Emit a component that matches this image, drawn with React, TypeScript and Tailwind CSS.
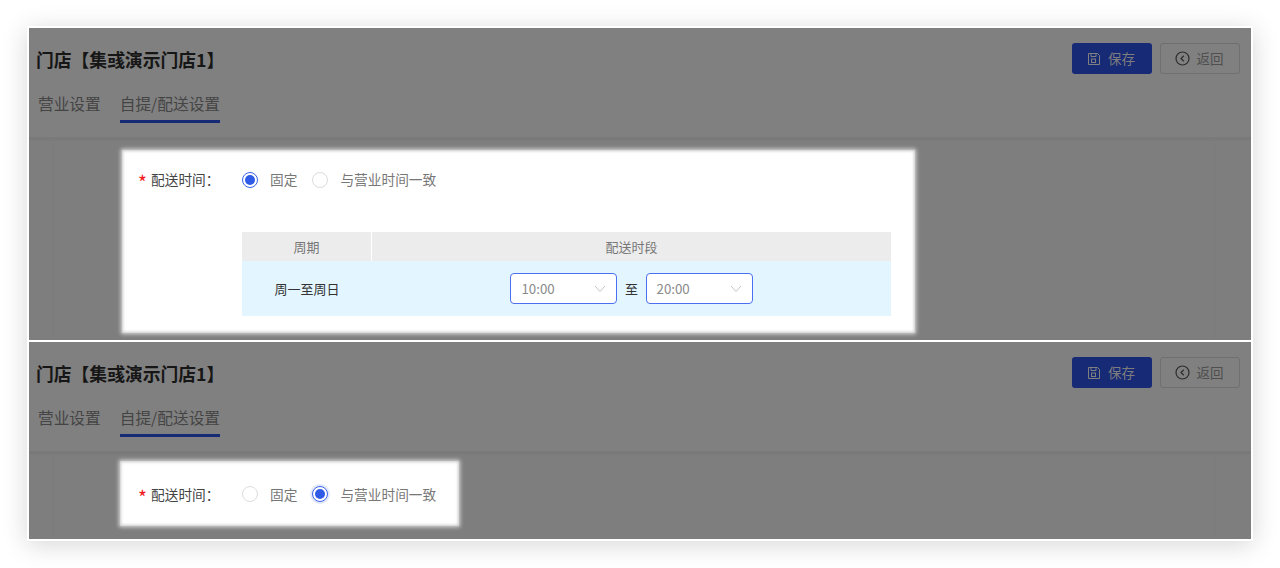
import React from "react";

const font = { fontFamily: '"Noto Sans CJK SC", "Liberation Sans", sans-serif' };

function Radio({ on, glow }: { on?: boolean; glow?: boolean }) {
  return (
    <span className={`mt-[1px] flex h-4 w-4 shrink-0 items-center justify-center rounded-full border bg-white ${on ? "border-[#3b63e8]" : "border-[#dcdcdc]"} ${glow ? "shadow-[0_0_0_2px_#e3e9fb]" : ""}`}>
      {on && <span className="h-[10px] w-[10px] rounded-full bg-[#2f5be7]" />}
    </span>
  );
}

function Header() {
  return (
    <div className="h-[110px] shrink-0 border-b border-[#7a7a7a] bg-[#808080] shadow-[0_1px_3px_rgba(0,0,0,0.08)]">
      <div className="flex items-start justify-between pl-[7px] pr-[11px] pt-[15px]">
        <h1 className="mt-[1px] text-[17.8px] font-bold leading-[30px] text-[#161616]">门店【集彧演示门店1】</h1>
        <div className="flex gap-2">
          <button className="flex h-[31px] w-20 items-center justify-center gap-[7px] rounded-[3px] bg-[#172a75] pr-[2px] text-[13.5px] text-[#7d7d7d]">
            <svg width="14" height="14" viewBox="0 0 14 14" fill="none" stroke="#808080" strokeWidth="1">
              <path d="M1.5 1.5h9l2 2v9h-11z" />
              <path d="M4 1.5v3h5v-3" />
              <rect x="4.5" y="7" width="4" height="3.5" />
            </svg>
            保存
          </button>
          <button className="flex h-[31px] w-20 items-center justify-center gap-[7px] rounded-[3px] border border-[#6f6f6f] pr-[2px] text-[13.5px] text-[#4f4f4f]">
            <svg width="15" height="15" viewBox="0 0 15 15" fill="none" stroke="#2c2c2c" strokeWidth="1.2">
              <circle cx="7.5" cy="7.5" r="6.5" />
              <path d="M8.8 4.8 6 7.5l2.8 2.7" />
            </svg>
            返回
          </button>
        </div>
      </div>
      <div className="mt-[18px] flex gap-[19px] pl-[9px] text-[15.7px] leading-[24px] text-[#444444]">
        <span className="pb-[4px]">营业设置</span>
        <span className="border-b-[3px] border-[#172a75] pb-[4px]">自提/配送设置</span>
      </div>
    </div>
  );
}

function FormRow({ second }: { second?: boolean }) {
  return (
    <div className="flex h-[20px] items-center text-[13.7px] leading-5">
      <span className="relative top-[3px] w-[10px] text-[19px] text-[#f01818]">*</span>
      <span className="ml-[3px] w-[91px] text-[#444444]">配送时间：</span>
      <Radio on={!second} />
      <span className="ml-[12px] text-[#777777]">固定</span>
      <span className="ml-[15px]"><Radio on={second} glow={second} /></span>
      <span className="ml-[12px] text-[#777777]">与营业时间一致</span>
    </div>
  );
}

function TimeSelect({ value }: { value: string }) {
  return (
    <div className="flex h-[31px] w-[107px] items-center justify-between rounded-[4px] border-[1.5px] border-[#4a6ff0] bg-white pl-[10px] pr-[10px] text-[13.3px] text-[#8a8a8a]">
      {value}
      <svg width="12" height="8" viewBox="0 0 12 8" fill="none" stroke="#c4c4c4" strokeWidth="1">
        <path d="M1 1l5 5.5L11 1" />
      </svg>
    </div>
  );
}

function Panel({ second }: { second?: boolean }) {
  return (
    <div className={`flex flex-col overflow-hidden bg-[#7e7e7e] ${second ? "h-[197px]" : "h-[312px]"}`}>
      <Header />
      <div className="ml-[24px] mr-[36px] flex-1 border-x border-[#7b7b7b]">
        {second ? (
          <div className="ml-[66px] mt-[9px] flex h-[65px] w-[339px] items-center bg-white pl-[18px] shadow-[0_0_4px_1px_rgba(255,255,255,0.75),inset_0_0_3px_1px_rgba(128,128,128,0.45)]">
            <FormRow second />
          </div>
        ) : (
          <div className="ml-[68px] mt-[12px] h-[183px] w-[793px] bg-white pl-[16px] pt-[19px] shadow-[0_0_4px_1px_rgba(255,255,255,0.75),inset_0_0_3px_1px_rgba(128,128,128,0.45)]">
            <FormRow />
            <div className="ml-[104px] mt-[43px] w-[649px] text-[13px]">
              <div className="flex h-[29px] bg-[#ececec] text-[#777777]">
                <div className="flex w-[130px] items-center justify-center border-r border-white">周期</div>
                <div className="flex flex-1 items-center justify-center">配送时段</div>
              </div>
              <div className="flex h-[55px] items-center bg-[#e3f5fe] text-[#333333]">
                <div className="flex w-[130px] justify-center">周一至周日</div>
                <div className="flex flex-1 items-center justify-center gap-[7.5px]">
                  <TimeSelect value="10:00" />
                  <span>至</span>
                  <TimeSelect value="20:00" />
                </div>
              </div>
            </div>
          </div>
        )}
      </div>
    </div>
  );
}

export default function App() {
  return (
    <div className="flex h-[568px] w-[1280px] bg-white pl-[27px] pt-[26px]" style={font}>
      <div className="flex h-[515px] w-[1226px] flex-col gap-[2px] border-2 border-white bg-white shadow-[0_4px_24px_rgba(0,0,0,0.16)]">
        <Panel />
        <Panel second />
      </div>
    </div>
  );
}
